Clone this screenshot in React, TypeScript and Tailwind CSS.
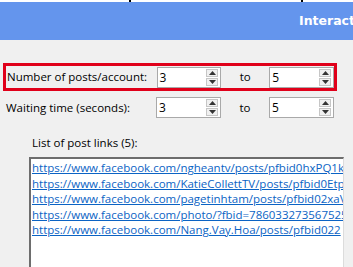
import React from 'react'

const links = [
  'https://www.facebook.com/ngheantv/posts/pfbid0hxPQ1k',
  'https://www.facebook.com/KatieCollettTV/posts/pfbid0Etp',
  'https://www.facebook.com/pagetinhtam/posts/pfbid02xaV',
  'https://www.facebook.com/photo/?fbid=7860332735675252',
  'https://www.facebook.com/Nang.Vay.Hoa/posts/pfbid022',
]

function Spin({ value }: { value: string }) {
  return (
    <div className="flex w-[65px] h-[21px] items-stretch bg-white border border-[#a9a9a9]">
      <span className="flex-1 pl-[2px] leading-[19px] text-[12px] text-black">{value}</span>
      <div className="flex flex-col w-[12px] my-[1px] mr-[2px] gap-[1px]">
        <div className="flex-1 flex items-center justify-center bg-[#f0f0f0] border border-[#c6c6c6]">
          <svg width="7" height="4" viewBox="0 0 7 4"><path d="M0 4 L3.5 0 L7 4 Z" fill="#333" /></svg>
        </div>
        <div className="flex-1 flex items-center justify-center bg-[#f0f0f0] border border-[#c6c6c6]">
          <svg width="7" height="4" viewBox="0 0 7 4"><path d="M0 0 L3.5 4 L7 0 Z" fill="#333" /></svg>
        </div>
      </div>
    </div>
  )
}

export default function App() {
  return (
    <div
      className="w-[353px] h-[267px] overflow-hidden bg-[#f0f0f0] text-[11.5px] text-black"
      style={{ fontFamily: '"Open Sans", "Noto Sans", sans-serif' }}
    >
      <div className="h-[2px] bg-white flex">
        <div className="ml-[129px] w-[2px] bg-black" />
        <div className="ml-[170px] w-[2px] bg-black" />
      </div>
      <div className="h-[38px] bg-[#6495ed] flex items-center pl-[299px] overflow-hidden whitespace-nowrap">
        <span className="text-white font-bold text-[12.5px]" style={{ fontFamily: '"DejaVu Sans", sans-serif' }}>
          Interacti
        </span>
      </div>

      <div className="ml-[3px] mt-[23px] w-[334px] h-[28px] border-[3px] border-[#e0001a] flex items-center pl-[1px]">
        <span className="w-[150px] whitespace-nowrap">Number of posts/account:</span>
        <Spin value="3" />
        <span className="w-[48px] text-center">to</span>
        <Spin value="5" />
      </div>

      <div className="ml-[6px] mt-[6px] flex items-center h-[21px]">
        <span className="w-[150px] whitespace-nowrap">Waiting time (seconds):</span>
        <Spin value="3" />
        <span className="w-[48px] text-center">to</span>
        <Spin value="5" />
      </div>

      <div className="ml-[32px] mt-[17px] leading-[16px]">List of post links (5):</div>

      <div className="ml-[29px] mt-[6px] w-[315px] h-[200px] bg-white border-t-2 border-l-2 border-[#6d6d6d] border-r border-r-[#dcdcdc] overflow-hidden pl-[1px] pt-[1px]">
        {links.map((l) => (
          <div key={l} className="whitespace-nowrap leading-[15.5px] text-[#0b63c4] underline">
            {l}
          </div>
        ))}
      </div>
    </div>
  )
}
